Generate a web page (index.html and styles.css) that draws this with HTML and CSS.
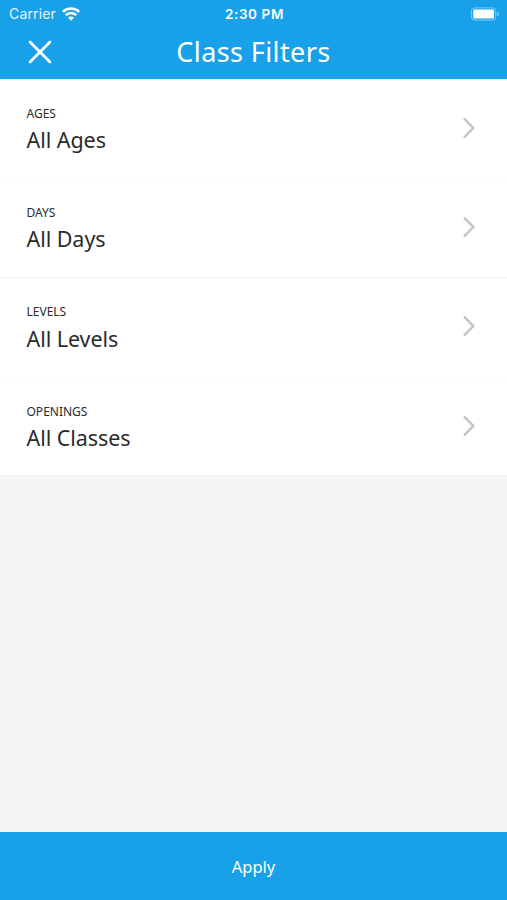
FILE: index.html
```html
<!DOCTYPE html>
<html lang="en">
<head>
    <meta charset="UTF-8">
    <meta name="viewport" content="width=device-width, initial-scale=1.0">
    <title>Class Filters</title>
    <link rel="stylesheet" href="styles.css">
</head>
<body>
    <div class="screen">
        <header class="header">
            <div class="status-bar">
                <div class="carrier">
                    <span class="carrier-name">Carrier</span>
                    <svg class="wifi" width="18" height="14" viewBox="0 0 18 14" fill="none" stroke="#fff" stroke-width="2.5">
                        <path d="M0.9 4.9C5.4 0.4 12.6 0.4 17.1 4.9"/>
                        <path d="M3.8 8.1C6.7 5.2 11.3 5.2 14.2 8.1"/>
                        <path d="M9 13.7L6.1 10.7C7.7 9.1 10.3 9.1 11.9 10.7Z" fill="#fff" stroke="none"/>
                    </svg>
                </div>
                <div class="time">2:30 PM</div>
                <svg class="battery" width="30" height="14" viewBox="0 0 30 14">
                    <rect x="1.4" y="0.9" width="24.4" height="12.2" rx="3" fill="none" stroke="#fff" stroke-opacity="0.45"/>
                    <rect x="3.2" y="2.6" width="20.8" height="8.8" rx="1.2" fill="#fff"/>
                    <path d="M27.3 4.8C29.6 5.6 29.6 8.4 27.3 9.2Z" fill="#fff" fill-opacity="0.45"/>
                </svg>
            </div>
            <div class="nav-bar">
                <svg class="close" width="24" height="24" viewBox="0 0 24 24" stroke="#fff" stroke-width="2.7" stroke-linecap="round">
                    <path d="M2 2L22 22M22 2L2 22"/>
                </svg>
                <div class="title">Class Filters</div>
            </div>
        </header>

        <main class="filters">
            <div class="filter">
                <div>
                    <div class="label">AGES</div>
                    <div class="value">All Ages</div>
                </div>
                <svg class="chevron" width="14" height="22" viewBox="0 0 14 22"><path d="M2 1.5L11.3 11L2 20.5"/></svg>
            </div>
            <div class="filter">
                <div>
                    <div class="label">DAYS</div>
                    <div class="value">All Days</div>
                </div>
                <svg class="chevron" width="14" height="22" viewBox="0 0 14 22"><path d="M2 1.5L11.3 11L2 20.5"/></svg>
            </div>
            <div class="filter">
                <div>
                    <div class="label">LEVELS</div>
                    <div class="value">All Levels</div>
                </div>
                <svg class="chevron" width="14" height="22" viewBox="0 0 14 22"><path d="M2 1.5L11.3 11L2 20.5"/></svg>
            </div>
            <div class="filter">
                <div>
                    <div class="label">OPENINGS</div>
                    <div class="value">All Classes</div>
                </div>
                <svg class="chevron" width="14" height="22" viewBox="0 0 14 22"><path d="M2 1.5L11.3 11L2 20.5"/></svg>
            </div>
        </main>

        <div class="apply">Apply</div>
    </div>
</body>
</html>
```
FILE: styles.css
```css
body {
    margin: 0;
    font-family: "Noto Sans", sans-serif;
    background: #f5f5f8;
    color: #2b2b2b;
}

.screen {
    display: flex;
    flex-direction: column;
    height: 100vh;
}

.header {
    height: 79px;
    background: #18a1e9;
    color: #fff;
}

.status-bar {
    display: grid;
    grid-template-columns: 1fr auto 1fr;
    align-items: center;
    height: 27px;
    padding: 0 7px 0 9px;
    font-family: Inter, sans-serif;
    font-size: 14px;
}

.carrier {
    display: flex;
    align-items: center;
    gap: 6px;
}

.carrier-name {
    letter-spacing: 0.15px;
    opacity: 0.9;
}

.time {
    font-size: 13.5px;
    font-weight: 600;
    letter-spacing: 0.6px;
}

.battery {
    justify-self: end;
}

/* side columns are equal so the title stays centered */
.nav-bar {
    display: grid;
    grid-template-columns: 1fr auto 1fr;
    align-items: center;
    height: 50px;
    padding: 0 28px;
}

.title {
    font-size: 27px;
    line-height: 50px;
    letter-spacing: 0.4px;
}

.filter {
    display: flex;
    justify-content: space-between;
    align-items: flex-start;
    box-sizing: border-box;
    height: 99.3px;
    padding: 26.8px 31px 0 26.5px;
    background: #fff;
    border-bottom: 1px solid #f2f2f3;
}

.filter:nth-child(odd) {
    border-bottom-color: #fbfbfb;
}

.label {
    font-size: 12px;
    line-height: 16px;
}

.value {
    margin-top: 3.4px;
    font-size: 21.5px;
    line-height: 30px;
    letter-spacing: -0.05px;
}

.chevron {
    margin-top: 11px;
    fill: none;
    stroke: #c3c3c3;
    stroke-width: 2.5;
}

.apply {
    height: 68.5px;
    margin-top: auto;
    background: #18a1e9;
    color: #fff;
    font-size: 16.5px;
    line-height: 69px;
    text-align: center;
}
```
